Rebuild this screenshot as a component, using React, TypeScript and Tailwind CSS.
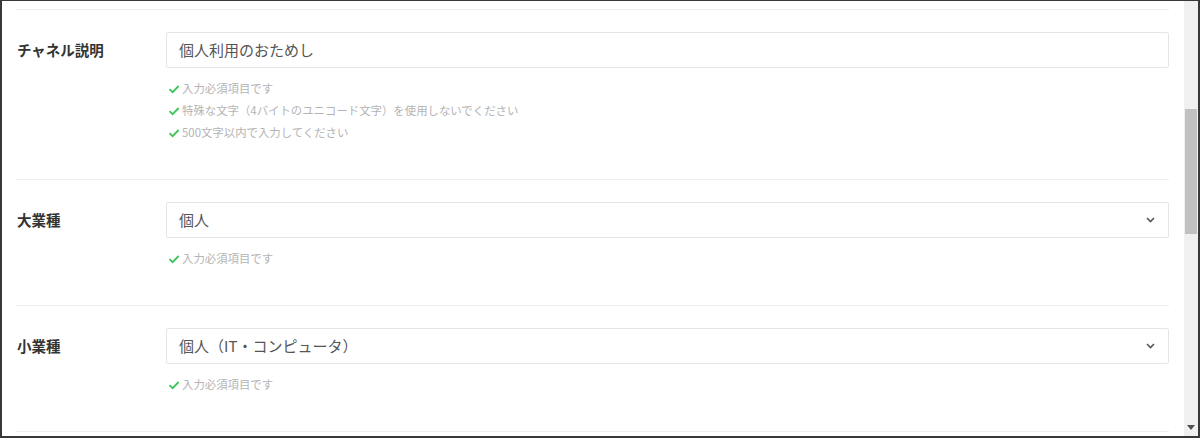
import React from "react";

type Field = {
  label: string;
  value: string;
  select?: boolean;
  checks: string[];
};

const fields: Field[] = [
  {
    label: "チャネル説明",
    value: "個人利用のおためし",
    checks: [
      "入力必須項目です",
      "特殊な文字（4バイトのユニコード文字）を使用しないでください",
      "500文字以内で入力してください",
    ],
  },
  {
    label: "大業種",
    value: "個人",
    select: true,
    checks: ["入力必須項目です"],
  },
  {
    label: "小業種",
    value: "個人（IT・コンピュータ）",
    select: true,
    checks: ["入力必須項目です"],
  },
];

const font = { fontFamily: '"Noto Sans CJK JP", "Noto Sans", sans-serif' };

function Check() {
  return (
    <svg width="12" height="12" viewBox="0 0 12 12" className="mr-[2px] shrink-0">
      <path d="M1.5 6.2 L4.6 9.2 L10.6 3" fill="none" stroke="#3dc55a" strokeWidth="1.8" />
    </svg>
  );
}

function Row({ field }: { field: Field }) {
  return (
    <div className="border-b border-[#efefef] pt-[22px] pb-[35px] flex">
      {/* label column */}
      <div className="w-[150px] shrink-0 h-[36px] flex items-center pl-[1px] text-[14.5px] font-bold text-[#333]">
        {field.label}
      </div>
      <div className="flex-1">
        <div className="h-[36px] border border-[#e3e5e8] rounded-[2px] flex items-center pl-[12px] pr-[12px] text-[15px] text-[#555]">
          <span className="flex-1">{field.value}</span>
          {field.select && (
            <svg width="9" height="6" viewBox="0 0 9 6" className="mr-[1px]">
              <path d="M1 1 L4.5 4.5 L8 1" fill="none" stroke="#555" strokeWidth="1.6" />
            </svg>
          )}
        </div>
        <div className="mt-[10px] pl-[2px]">
          {field.checks.map((c) => (
            <div key={c} className="h-[22px] flex items-center text-[11.4px] text-[#b4b4b4]">
              <Check />
              {c}
            </div>
          ))}
        </div>
      </div>
    </div>
  );
}

export default function App() {
  return (
    <div
      className="w-[1200px] h-[438px] border-2 border-t-[1px] border-[#383838] bg-white flex overflow-hidden"
      style={font}
    >
      <div className="flex-1 pl-[14px] pr-[15px] pt-[8px]">
        <div className="border-t border-[#efefef]" />
        {fields.map((f) => (
          <Row key={f.label} field={f} />
        ))}
      </div>
      {/* scrollbar */}
      <div className="w-[14px] bg-[#f0f0f0] flex flex-col items-center">
        <div className="h-[108px]" />
        <div className="w-[12px] h-[125px] bg-[#c1c1c1]" />
        <div className="flex-1" />
        <svg width="8" height="6" viewBox="0 0 8 6" className="mb-[5px]">
          <path d="M0 0 L8 0 L4 5 Z" fill="#505050" />
        </svg>
      </div>
    </div>
  );
}
